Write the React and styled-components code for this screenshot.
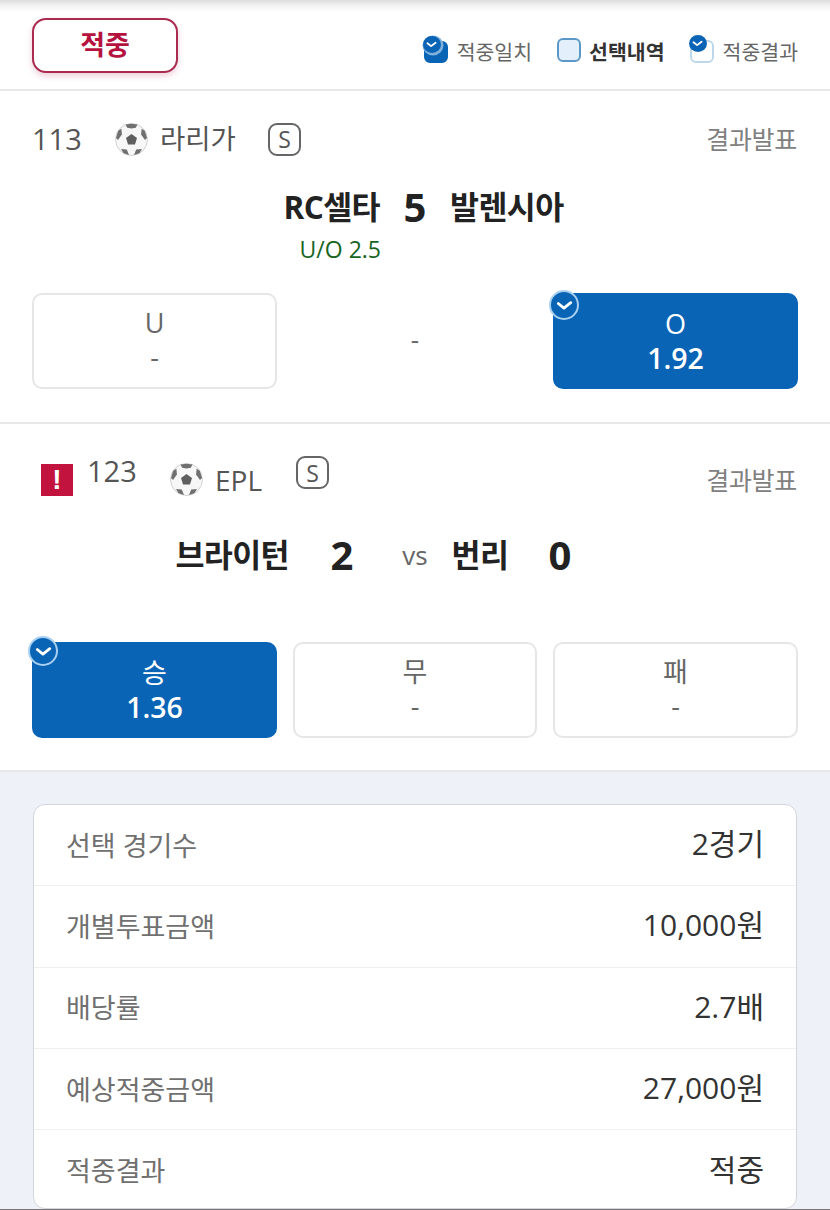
import React from "react";
import styled, { createGlobalStyle } from "styled-components";

const GlobalStyle = createGlobalStyle`
  html, body {
    margin: 0;
    padding: 0;
    background: #fff;
    font-family: "Open Sans", "Noto Sans CJK KR", sans-serif;
  }
`;

const Page = styled.div`
  width: 830px;
  height: 1210px;
  overflow: hidden;
  position: relative;
  display: flex;
  flex-direction: column;
`;

const TopShade = styled.div`
  position: absolute;
  top: 0;
  left: 0;
  right: 0;
  height: 12px;
  background: linear-gradient(#dcdcdc, #f3f3f3 50%, #fff);
`;

const Header = styled.div`
  height: 91px;
  box-sizing: border-box;
  padding: 18px 32px 0;
  display: flex;
  justify-content: space-between;
  align-items: flex-start;
  border-bottom: 2px solid #e8e8e8;
  flex: none;
`;

const HitBadge = styled.div`
  width: 146px;
  height: 55px;
  box-sizing: border-box;
  border: 2px solid #ab2a50;
  border-radius: 14px;
  background: #fff;
  box-shadow: 0 3px 6px rgba(171, 42, 80, 0.22);
  color: #b5133f;
  font-size: 27px;
  font-weight: 700;
  display: flex;
  align-items: center;
  justify-content: center;
  padding-bottom: 4px;
`;

const Legend = styled.div`
  display: flex;
  align-items: center;
  gap: 25px;
  margin-top: 18px;
`;

const LegendItem = styled.div`
  display: flex;
  align-items: center;
  gap: ${(p) => (p.$bold ? 8 : 9)}px;
  font-size: 20.5px;
  line-height: 32px;
  color: ${(p) => (p.$bold ? "#333" : "#666")};
  font-weight: ${(p) => (p.$bold ? 700 : 400)};
`;

const LegendBox = styled.div`
  width: 24px;
  height: ${(p) => p.$h}px;
  box-sizing: border-box;
  border-radius: 6px;
  position: relative;
  margin-top: ${(p) => p.$mt || 0}px;
  background: ${(p) => p.$bg};
  border: 2px solid ${(p) => p.$line};
`;

const LegendCheck = styled.div`
  position: absolute;
  left: -3px;
  top: -7px;
  width: 18px;
  height: 17px;
  border-radius: 50%;
  background: #0a64b5;
  box-shadow: ${(p) => (p.$halo ? "1px 1px 0 1.5px #7fb0dd" : "none")};
  display: flex;
  align-items: center;
  justify-content: center;
`;

const Section = styled.section`
  height: ${(p) => p.$h}px;
  box-sizing: border-box;
  padding: 0 32px;
  border-bottom: 2px solid #e8e8e8;
  flex: none;
  display: flex;
  flex-direction: column;
`;

const MetaRow = styled.div`
  display: flex;
  align-items: ${(p) => p.$align || "center"};
  height: ${(p) => p.$h}px;
  margin-top: ${(p) => p.$mt}px;
  flex: none;
`;

const GameNo = styled.span`
  font-size: 29px;
  line-height: 34px;
  color: #555;
  width: ${(p) => p.$w}px;
  margin-top: ${(p) => p.$mt || 0}px;
  flex: none;
`;

const Flag = styled.div`
  width: 32px;
  height: 32px;
  background: #c2133f;
  color: #fff;
  font-family: "Liberation Sans", sans-serif;
  font-size: 28px;
  font-weight: 700;
  display: flex;
  align-items: center;
  justify-content: center;
  margin: 23px 14px 0 9px;
  flex: none;
`;

const League = styled.span`
  font-size: ${(p) => p.$size}px;
  line-height: 34px;
  color: #555;
  margin-left: ${(p) => p.$ml}px;
  margin-top: ${(p) => p.$mt || 0}px;
  width: ${(p) => p.$w}px;
  flex: none;
`;

const BallWrap = styled.div`
  width: 33px;
  height: 33px;
  margin-top: ${(p) => p.$mt || 0}px;
  flex: none;
`;

const SBadge = styled.div`
  width: 33px;
  height: 33px;
  box-sizing: border-box;
  border: 2px solid #666;
  border-radius: 9px;
  color: #555;
  font-size: 23px;
  display: flex;
  align-items: center;
  justify-content: center;
  flex: none;
  margin-top: ${(p) => p.$mt || 0}px;
`;

const Status = styled.span`
  margin: ${(p) => p.$mt || 0}px 1px 0 auto;
  font-size: 25px;
  line-height: 34px;
  color: #808080;
  letter-spacing: -0.3px;
`;

const ScoreRow = styled.div`
  display: grid;
  grid-template-columns: ${(p) => p.$cols};
  grid-template-rows: 44px;
  align-items: center;
  height: 44px;
  margin-top: ${(p) => p.$mt}px;
  flex: none;
`;

const Team = styled.div`
  font-size: 31.5px;
  line-height: 44px;
  font-weight: 700;
  color: #222;
  letter-spacing: -0.6px;
  text-align: ${(p) => p.$align || "left"};
  white-space: nowrap;
`;

const Score = styled.div`
  font-size: 40px;
  line-height: 44px;
  font-weight: 700;
  color: #222;
  text-align: center;
`;

const Versus = styled.div`
  font-size: 26px;
  line-height: 44px;
  color: #666;
  text-align: center;
`;

const Handicap = styled.div`
  font-size: 23px;
  line-height: 30px;
  color: #17651f;
  text-align: right;
  width: 349px;
  margin-top: 5px;
  flex: none;
`;

const Options = styled.div`
  display: grid;
  grid-template-columns: 245px 1fr 245px;
  column-gap: 16px;
  margin-top: ${(p) => p.$mt}px;
  flex: none;
`;

const Option = styled.div`
  height: 96px;
  box-sizing: border-box;
  border-radius: 10px;
  position: relative;
  padding-bottom: ${(p) => (p.$on ? 0 : 2)}px;
  border: 2px solid ${(p) => (p.$on ? "#0a64b5" : "#e6e6e6")};
  background: ${(p) => (p.$on ? "#0a64b5" : "#fff")};
  color: ${(p) => (p.$on ? "#fff" : "#666")};
  display: flex;
  flex-direction: column;
  align-items: center;
  justify-content: center;
`;

const OptionName = styled.div`
  font-size: 27px;
  line-height: 34px;
`;

const OptionOdds = styled.div`
  font-size: ${(p) => (p.$on ? 28.5 : 27)}px;
  line-height: 34px;
  font-weight: ${(p) => (p.$on ? 600 : 400)};
`;

const Dash = styled.div`
  height: 96px;
  display: flex;
  align-items: center;
  justify-content: center;
  font-size: 26px;
  color: #666;
  padding-bottom: 5px;
  box-sizing: border-box;
`;

const CheckMark = styled.div`
  position: absolute;
  left: -6px;
  top: ${(p) => p.$top}px;
  width: 30px;
  height: 30px;
  box-sizing: border-box;
  border-radius: 50%;
  background: #0a64b5;
  border: 2px solid #a8d0f0;
  display: flex;
  align-items: center;
  justify-content: center;
`;

const Summary = styled.div`
  flex: 1;
  background: #eef1f8;
  padding: 32px 33px 0;
`;

const Card = styled.div`
  background: #fff;
  border: 1.5px solid #d2d5dc;
  border-radius: 12px;
  height: 405px;
  box-sizing: border-box;
  overflow: hidden;
`;

const SummaryRow = styled.div`
  height: 81.3px;
  box-sizing: border-box;
  padding: 0 32px 0 32px;
  display: flex;
  align-items: center;
  justify-content: space-between;
  border-bottom: 1.5px solid #f0f0f0;

  &:last-child {
    border-bottom: 0;
  }
`;

const RowLabel = styled.span`
  font-size: 27px;
  color: #707070;
  margin-bottom: 2px;
`;

const RowValue = styled.span`
  font-size: 30px;
  color: #333;
  margin-bottom: 6px;
`;

const BottomLine = styled.div`
  position: absolute;
  left: 0;
  right: 0;
  bottom: 0;
  height: 1px;
  background: #777;
`;

const Tick = ({ size = 12, width = 2 }) => (
  <svg width={size} height={size} viewBox="0 0 12 12" fill="none">
    <path d="M1.6 4.6 L5.6 7.8 L10.4 4" stroke="#fff" strokeWidth={width} strokeLinecap="round" strokeLinejoin="round" />
  </svg>
);

const Ball = () => (
  <svg width="33" height="33" viewBox="0 0 33 33">
    <circle cx="16.5" cy="16.5" r="16" fill="#f7f7f7" stroke="#d0d0d0" strokeWidth="1" />
    <polygon points="16.5,11 22,15 20,21.5 13,21.5 11,15" fill="#5f5f5f" />
    <path d="M10.5 1.6 L16.5 0.7 L22.5 1.6 L20.8 4.8 L16.5 5.6 L12.2 4.8 Z" fill="#707070" />
    <path d="M1 15 L3.2 7.8 L6.4 5.8 L6.9 11.5 L3 17 Z" fill="#707070" />
    <path d="M32 15 L29.8 7.8 L26.6 5.8 L26.1 11.5 L30 17 Z" fill="#707070" />
    <path d="M6 26 L11.8 26.6 L14 32 L8.6 30.2 Z" fill="#707070" />
    <path d="M27 26 L21.2 26.6 L19 32 L24.4 30.2 Z" fill="#707070" />
  </svg>
);

const rows = [
  ["선택 경기수", "2경기"],
  ["개별투표금액", "10,000원"],
  ["배당률", "2.7배"],
  ["예상적중금액", "27,000원"],
  ["적중결과", "적중"],
];

const OptionCard = ({ name, odds, on, checkTop }) => (
  <Option $on={on}>
    {on && (
      <CheckMark $top={checkTop}>
        <Tick size={17} />
      </CheckMark>
    )}
    <OptionName>{name}</OptionName>
    <OptionOdds $on={on}>{odds}</OptionOdds>
  </Option>
);

export default function App() {
  return (
    <Page>
      <GlobalStyle />
      <TopShade />
      <Header>
        <HitBadge>적중</HitBadge>
        <Legend>
          <LegendItem>
            <LegendBox $h={22} $bg="#0a64b5" $line="#0a64b5">
              <LegendCheck $halo>
                <Tick size={11} />
              </LegendCheck>
            </LegendBox>
            적중일치
          </LegendItem>
          <LegendItem $bold>
            <LegendBox $h={24} $bg="#e3f0fb" $line="#5b98c8" $mt={-4} />
            선택내역
          </LegendItem>
          <LegendItem>
            <LegendBox $h={23} $bg="#fff" $line="#bcd8ea" $mt={-2}>
              <LegendCheck>
                <Tick size={11} />
              </LegendCheck>
            </LegendBox>
            적중결과
          </LegendItem>
        </Legend>
      </Header>

      <Section $h={333}>
        <MetaRow $h={34} $mt={31}>
          <GameNo $w={83}>113</GameNo>
          <BallWrap>
            <Ball />
          </BallWrap>
          <League $size={27.5} $ml={12} $w={108}>라리가</League>
          <SBadge>S</SBadge>
          <Status>결과발표</Status>
        </MetaRow>
        <ScoreRow $cols="348px 70px 1fr" $mt={29}>
          <Team $align="right">RC셀타</Team>
          <Score>5</Score>
          <Team>발렌시아</Team>
        </ScoreRow>
        <Handicap>U/O 2.5</Handicap>
        <Options $mt={29}>
          <OptionCard name="U" odds="-" />
          <Dash>-</Dash>
          <OptionCard name="O" odds="1.92" on checkTop={-5} />
        </Options>
      </Section>

      <Section $h={348}>
        <MetaRow $h={70} $mt={17} $align="flex-start">
          <Flag>!</Flag>
          <GameNo $w={83} $mt={13}>123</GameNo>
          <BallWrap $mt={22}>
            <Ball />
          </BallWrap>
          <League $size={28} $ml={12} $w={81} $mt={22}>EPL</League>
          <SBadge $mt={15}>S</SBadge>
          <Status $mt={22}>결과발표</Status>
        </MetaRow>
        <ScoreRow $cols="257px 106px 40px 90px 70px" $mt={22}>
          <Team $align="right">브라이턴</Team>
          <Score>2</Score>
          <Versus>vs</Versus>
          <Team $align="center">번리</Team>
          <Score>0</Score>
        </ScoreRow>
        <Options $mt={65}>
          <OptionCard name="승" odds="1.36" on checkTop={-8} />
          <OptionCard name="무" odds="-" />
          <OptionCard name="패" odds="-" />
        </Options>
      </Section>

      <Summary>
        <Card>
          {rows.map(([label, value]) => (
            <SummaryRow key={label}>
              <RowLabel>{label}</RowLabel>
              <RowValue>{value}</RowValue>
            </SummaryRow>
          ))}
        </Card>
      </Summary>
      <BottomLine />
    </Page>
  );
}
